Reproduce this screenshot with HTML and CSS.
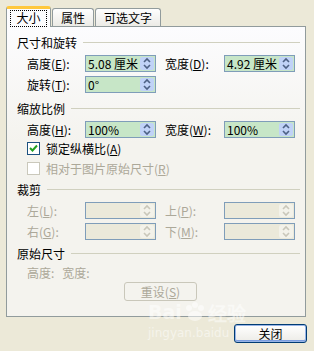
FILE: index.html
```html
<!DOCTYPE html>
<html lang="zh-CN">
<head>
    <meta charset="UTF-8">
    <title>设置图片格式</title>
    <link rel="stylesheet" href="styles.css">
</head>
<body>
    <div class="dialog">
        <div class="tabs">
            <div class="tab active"><span class="focus">大小</span></div>
            <div class="tab">属性</div>
            <div class="tab">可选文字</div>
        </div>
        <div class="panel">
            <div class="title"><span>尺寸和旋转</span><i></i></div>
            <div class="row">
                <span class="label">高度(<u>E</u>):</span>
                <div class="spin"><span class="val">5.08 厘米</span><b class="arrows"></b></div>
                <span class="label second">宽度(<u>D</u>):</span>
                <div class="spin"><span class="val">4.92 厘米</span><b class="arrows"></b></div>
            </div>
            <div class="row">
                <span class="label">旋转(<u>T</u>):</span>
                <div class="spin"><span class="val">0°</span><b class="arrows"></b></div>
            </div>

            <div class="title t2"><span>缩放比例</span><i></i></div>
            <div class="row">
                <span class="label">高度(<u>H</u>):</span>
                <div class="spin"><span class="val">100%</span><b class="arrows"></b></div>
                <span class="label second">宽度(<u>W</u>):</span>
                <div class="spin"><span class="val">100%</span><b class="arrows"></b></div>
            </div>
            <div class="check">
                <span class="box"><svg width="9" height="9" viewBox="0 0 9 9"><path d="M1 4 L3.5 6.5 L8 1.5" fill="none" stroke="#21a121" stroke-width="2"/></svg></span>
                <span>锁定纵横比(<u>A</u>)</span>
            </div>
            <div class="check disabled">
                <span class="box"></span>
                <span>相对于图片原始尺寸(<u>R</u>)</span>
            </div>

            <div class="title t3"><span>裁剪</span><i></i></div>
            <div class="row disabled">
                <span class="label">左(<u>L</u>):</span>
                <div class="spin off"><span class="val"></span><b class="arrows"></b></div>
                <span class="label second">上(<u>P</u>):</span>
                <div class="spin off"><span class="val"></span><b class="arrows"></b></div>
            </div>
            <div class="row disabled">
                <span class="label">右(<u>G</u>):</span>
                <div class="spin off"><span class="val"></span><b class="arrows"></b></div>
                <span class="label second">下(<u>M</u>):</span>
                <div class="spin off"><span class="val"></span><b class="arrows"></b></div>
            </div>

            <div class="title t4"><span>原始尺寸</span><i></i></div>
            <div class="orig">
                <span>高度:</span>
                <span>宽度:</span>
            </div>
            <div class="reset-row">
                <button class="btn off">重设(<u>S</u>)</button>
            </div>
        </div>
        <div class="footer">
            <button class="btn default">关闭</button>
        </div>
        <div class="watermark">
            <div class="wm-logo">Bai<svg width="26" height="20" viewBox="0 0 26 20"><circle cx="7" cy="6" r="3"/><circle cx="13" cy="3" r="3"/><circle cx="19" cy="6" r="3"/><ellipse cx="13" cy="14" rx="7" ry="5"/></svg>经验</div>
            <div class="wm-url">jingyan.baidu</div>
        </div>
    </div>
</body>
</html>
```

FILE: styles.css
```css
body {
    margin: 0;
    background: #ece9d8;
    font-family: "Noto Sans CJK SC", "DejaVu Sans", sans-serif;
    font-size: 12px;
    color: #000;
}
.dialog {
    position: relative;
    width: 314px;
    height: 351px;
    padding: 5px 0 0 6px;
    box-sizing: border-box;
}
.tabs {
    display: flex;
    align-items: flex-end;
    height: 21px;
}
.tab {
    height: 18px;
    line-height: 17px;
    padding: 0 8px;
    box-sizing: border-box;
    border: 1px solid #919b9c;
    border-bottom: none;
    border-radius: 3px 3px 0 0;
    background: linear-gradient(#fefefe, #ecebe6);
    margin-right: 1px;
}
.tab.active {
    height: 21px;
    width: 45px;
    padding: 3px 3px 0;
    border-top: 3px solid #ffc83c;
    border-color: #ffc83c #919b9c #919b9c;
    background: #fcfcfe;
    position: relative;
    z-index: 1;
    margin-bottom: -1px;
}
.focus {
    display: block;
    height: 15px;
    line-height: 14px;
    border: 1px dotted #000;
    text-align: center;
    margin-top: -2px;
}
.panel {
    width: 300px;
    height: 291px;
    box-sizing: border-box;
    border: 1px solid #919b9c;
    background: linear-gradient(#fcfcfe, #f4f3ee 40%);
    padding-top: 6px;
}
.title {
    display: flex;
    align-items: center;
    height: 18px;
    padding-left: 10px;
    margin-right: 5px;
}
.title i {
    flex: 1;
    border-top: 1px solid #d0d0bf;
    margin-left: 6px;
}
.t2 { margin-top: 6px; }
.t3 { margin-top: 2px; }
.t4 { margin-top: 4px; }
.row {
    display: flex;
    align-items: center;
    height: 17px;
    margin-top: 4px;
    padding-left: 20px;
}
.label {
    width: 58px;
    white-space: nowrap;
}
.label.second {
    width: 59px;
    margin-left: 9px;
}
.spin {
    display: flex;
    width: 71px;
    height: 17px;
    box-sizing: border-box;
    border: 1px solid #7f9db9;
    background: #c7e6c7;
}
.val {
    flex: 1;
    padding-left: 2px;
    line-height: 15px;
    white-space: nowrap;
    overflow: hidden;
}
.arrows {
    width: 14px;
    margin: 1px;
    border-radius: 2px;
    background: #c0d2f7 url("data:image/svg+xml,%3Csvg xmlns='http://www.w3.org/2000/svg' width='14' height='13'%3E%3Cpath d='M4 5 L7 2 L10 5 M4 8 L7 11 L10 8' fill='none' stroke='%234d6185' stroke-width='1.6'/%3E%3C/svg%3E") center no-repeat;
}
.spin.off {
    background: #ebe9da;
}
.spin.off .arrows {
    background-color: #f3f2ea;
    background-image: url("data:image/svg+xml,%3Csvg xmlns='http://www.w3.org/2000/svg' width='14' height='13'%3E%3Cpath d='M4 5 L7 2 L10 5 M4 8 L7 11 L10 8' fill='none' stroke='%23c9c7ba' stroke-width='1.6'/%3E%3C/svg%3E");
}
.disabled {
    color: #aca899;
}
.check {
    display: flex;
    align-items: center;
    height: 20px;
    padding-left: 20px;
}
.check:first-of-type { margin-top: 1px; }
.box {
    display: flex;
    align-items: center;
    justify-content: center;
    width: 13px;
    height: 13px;
    box-sizing: border-box;
    border: 1px solid #1c5180;
    background: #fff;
    margin-right: 6px;
}
.check.disabled .box {
    border-color: #cac8bb;
}
.orig {
    display: flex;
    gap: 8px;
    height: 18px;
    line-height: 18px;
    margin-top: 2px;
    padding-left: 20px;
    color: #aca899;
}
.reset-row {
    padding-left: 117px;
}
.btn {
    font: inherit;
    height: 19px;
    width: 73px;
    padding: 0;
    border: 1px solid #003c74;
    border-radius: 3px;
    background: linear-gradient(#ffffff, #ecebe6);
    color: #000;
}
.btn.off {
    border-color: #c9c7ba;
    background: #f4f3ee;
    color: #aca899;
}
.btn.default {
    box-shadow: inset 0 0 0 1px #98b4e6, inset 0 -1px 0 1px #7b9ee0;
}
.footer {
    display: flex;
    justify-content: flex-end;
    padding: 7px 7px 0 0;
}
.watermark {
    position: absolute;
    left: 148px;
    top: 302px;
    color: rgba(255, 255, 255, 0.5);
    pointer-events: none;
}
.wm-logo {
    display: flex;
    align-items: center;
    font: bold 19px "DejaVu Sans", sans-serif;
    height: 20px;
}
.wm-logo svg {
    fill: rgba(255, 255, 255, 0.5);
}
.wm-url {
    font: 12px "DejaVu Sans", sans-serif;
    margin-top: 4px;
}
```
